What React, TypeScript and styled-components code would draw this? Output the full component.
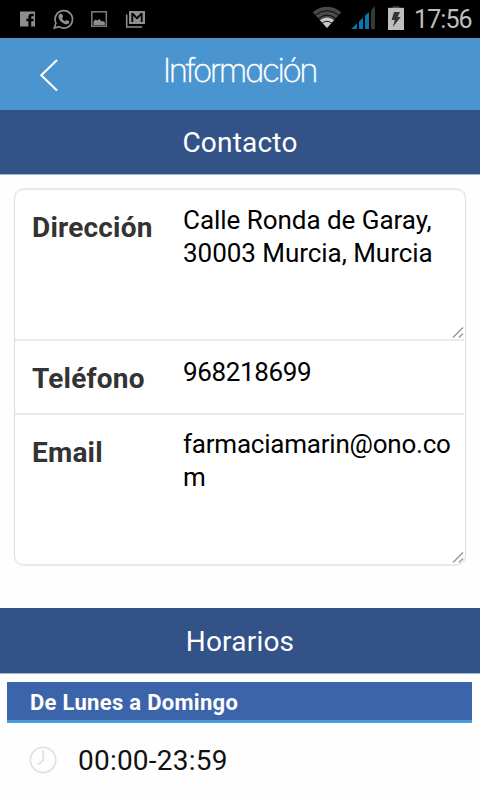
import React from "react";
import styled, { createGlobalStyle } from "styled-components";

const Global = createGlobalStyle`
  * { box-sizing: border-box; }
  body { margin: 0; background: #fff; font-family: Roboto, "Noto Sans", sans-serif; }
`;

const Screen = styled.div`
  width: 480px;
  height: 800px;
  overflow: hidden;
  display: flex;
  flex-direction: column;
  background: #fefefe;
`;

const StatusBar = styled.div`
  height: 38px;
  flex: none;
  background: #000;
  display: flex;
  justify-content: space-between;
  svg { display: block; }
`;

const Clock = styled.div`
  width: 66px;
  line-height: 38px;
  padding-top: 1px;
  font-size: 25px;
  letter-spacing: -0.9px;
  color: #bebebe;
`;

const Tray = styled.div`
  display: flex;
`;

const NavBar = styled.header`
  height: 72px;
  flex: none;
  display: grid;
  grid-template-columns: 100px 280px 100px;
  background: #4a95d0;
`;

const BackButton = styled.button`
  border: 0;
  padding: 0;
  background: none;
  svg { display: block; }
`;

const Title = styled.h1`
  margin: 0;
  padding-right: 1px;
  font: 200 33px/64px Inter, sans-serif;
  font-feature-settings: "cv11" 1;
  letter-spacing: -2.5px;
  text-align: center;
  color: #fff;
  -webkit-text-stroke: 0.3px #fff;
`;

const SectionHeader = styled.h2<{ $height: number; $shift?: number }>`
  margin: 0;
  flex: none;
  height: ${(p) => p.$height}px;
  line-height: ${(p) => p.$height + (p.$shift ?? 0)}px;
  border-bottom: 1px solid #a5b4cf;
  background: #325288;
  color: #fff;
  font-size: 28px;
  font-weight: 400;
  letter-spacing: 0.2px;
  text-align: center;
`;

const Card = styled.section`
  flex: none;
  margin: 13px 14px 42px;
  height: 378px;
  border: 1px solid #dcdcdc;
  border-width: 2px 1px;
  border-color: #e8e8e8 #dcdcdc;
  border-radius: 10px;
  display: grid;
  grid-template-rows: 151px 74px 1fr;
  background: #fff;
`;

const Row = styled.div`
  display: grid;
  grid-template-columns: 168px 1fr;
  position: relative;
  border-bottom: 2px solid #ebebeb;
  margin-right: 1px;
  &:last-child { border-bottom: 0; }
`;

const Label = styled.div`
  padding: 21px 0 0 17px;
  font-size: 28px;
  line-height: 33px;
  font-weight: 700;
  letter-spacing: 0.2px;
  color: #333;
`;

const Value = styled.div<{ $top: number; $spacing?: number }>`
  padding-top: ${(p) => p.$top}px;
  font-size: 26px;
  line-height: 33px;
  letter-spacing: ${(p) => p.$spacing ?? 0}px;
  color: #000;
  overflow-wrap: anywhere;
  padding-right: 8px;
`;

const Grip = styled.svg`
  position: absolute;
  right: 0;
  bottom: 0;
`;

const DayBar = styled.h3`
  flex: none;
  margin: 8px 8px 0 7px;
  height: 41px;
  padding: 2px 23px 0;
  line-height: 38px;
  font-size: 22px;
  font-weight: 700;
  letter-spacing: 0.3px;
  color: #fff;
  background: #3c64aa;
  border-bottom: 3px solid #4a9bd9;
`;

const Hours = styled.div`
  height: 74px;
  padding-left: 29px;
  display: flex;
  align-items: center;
  gap: 21px;
  font-size: 28px;
  letter-spacing: 0.22px;
  color: #111;
`;

const GripIcon = () => (
  <Grip width="12" height="13" viewBox="0 0 12 13" stroke="#999" strokeWidth="1.5">
    <path d="M1 11.5L11 1.5M7 11.5L11 7.5" />
  </Grip>
);

export default function App() {
  return (
    <>
      <Global />
      <Screen>
        <StatusBar>
          <svg width="160" height="38" fill="#8e8e8e">
            <path fillRule="evenodd" d="M20 11.5h15v15h-3.8v-5.2h2.4v-2.6h-2.4v-1.4q0-1.1 1.2-1.1h1.4v-2.5h-2.2q-3.2 0-3.2 3.4v1.6h-2v2.6h2v5.2H20z" />
            <path d="M54.3 28l1.6-5A8.7 8.7 0 1 1 59 26.6z" fill="none" stroke="#8e8e8e" strokeWidth="1.7" />
            <path d="M60.3 13.8l1.8.2 1 2.8-1.1 1.6q1 2 3.2 2.9l1.4-1.4 2.7 1.3q.2 3-3 3.1c-4.2-.6-7.8-4.3-7.9-8.1q.2-1.6 1.9-2.4z" />
            <rect x="91.8" y="11.8" width="14.5" height="14.4" fill="none" stroke="#777" strokeWidth="1.6" />
            <path d="M93.5 25v-3.5l2-2 2 1 2-1.5 2 2.5 1.5-.5 1.8 1.2V25z" />
            <path d="M126.7 14.5V27h15.5" fill="none" stroke="#8e8e8e" strokeWidth="1.6" />
            <path fillRule="evenodd" d="M129 11h16v13h-16zM131.4 13v9h1.8v-6.2l3.8 3.8 3.8-3.8V22h1.8v-9h-1.7L137 17l-3.9-4z" />
          </svg>
          <Tray>
            <svg width="114" height="38">
              <path d="M12.7 12.2Q27 1.5 41.3 12.2L27 28z" fill="#4a4a4a" />
              <path d="M20 20.3Q27 14.5 34 20.3L27 28z" fill="#c8c8c8" />
              <path d="M15 15.3Q27 6 39 15.3M18 18.8Q27 11.5 36 18.8M22 23.3Q27 19.3 32 23.3" fill="none" stroke="#000" strokeWidth="0.9" />
              <path d="M51 29l6-5.5V29zM59 29v-7.5l4-3.7V29zM65 29V15.7l4-3.8V29z" fill="#0878b0" />
              <path d="M71 29V10.2L75 6v23z" fill="#383838" />
              <path d="M92.5 6.2h7v1.6h-7z" fill="#444" />
              <path d="M88 7.8h16V30H88z" fill="#bebebe" />
              <path d="M94 12h6l-2.4 5h3.2l-8 10 2-7h-3.2z" fill="#333" />
            </svg>
            <Clock>17:56</Clock>
          </Tray>
        </StatusBar>
        <NavBar>
          <BackButton aria-label="Atrás">
            <svg width="100" height="72" fill="none" stroke="#fff" strokeWidth="2.1">
              <path d="M57 22L41.3 37.3L57 52.5" />
            </svg>
          </BackButton>
          <Title>Información</Title>
        </NavBar>
        <SectionHeader $height={65}>Contacto</SectionHeader>
        <Card>
          <Row>
            <Label>Dirección</Label>
            <Value $top={14} $spacing={-0.04}>Calle Ronda de Garay,<br />30003 Murcia, Murcia</Value>
            <GripIcon />
          </Row>
          <Row>
            <Label>Teléfono</Label>
            <Value $top={15} $spacing={-0.35}>968218699</Value>
          </Row>
          <Row>
            <Label>Email</Label>
            <Value $top={13} $spacing={-0.22}>farmaciamarin@ono.com</Value>
            <GripIcon />
          </Row>
        </Card>
        <SectionHeader $height={66} $shift={2}>Horarios</SectionHeader>
        <DayBar>De Lunes a Domingo</DayBar>
        <Hours>
          <svg width="28" height="28" fill="none" stroke="#e2e2e2" strokeWidth="1.8">
            <circle cx="14" cy="14" r="12.7" />
            <path d="M14.2 4v10.2L9 18.5" />
          </svg>
          00:00-23:59
        </Hours>
      </Screen>
    </>
  );
}
